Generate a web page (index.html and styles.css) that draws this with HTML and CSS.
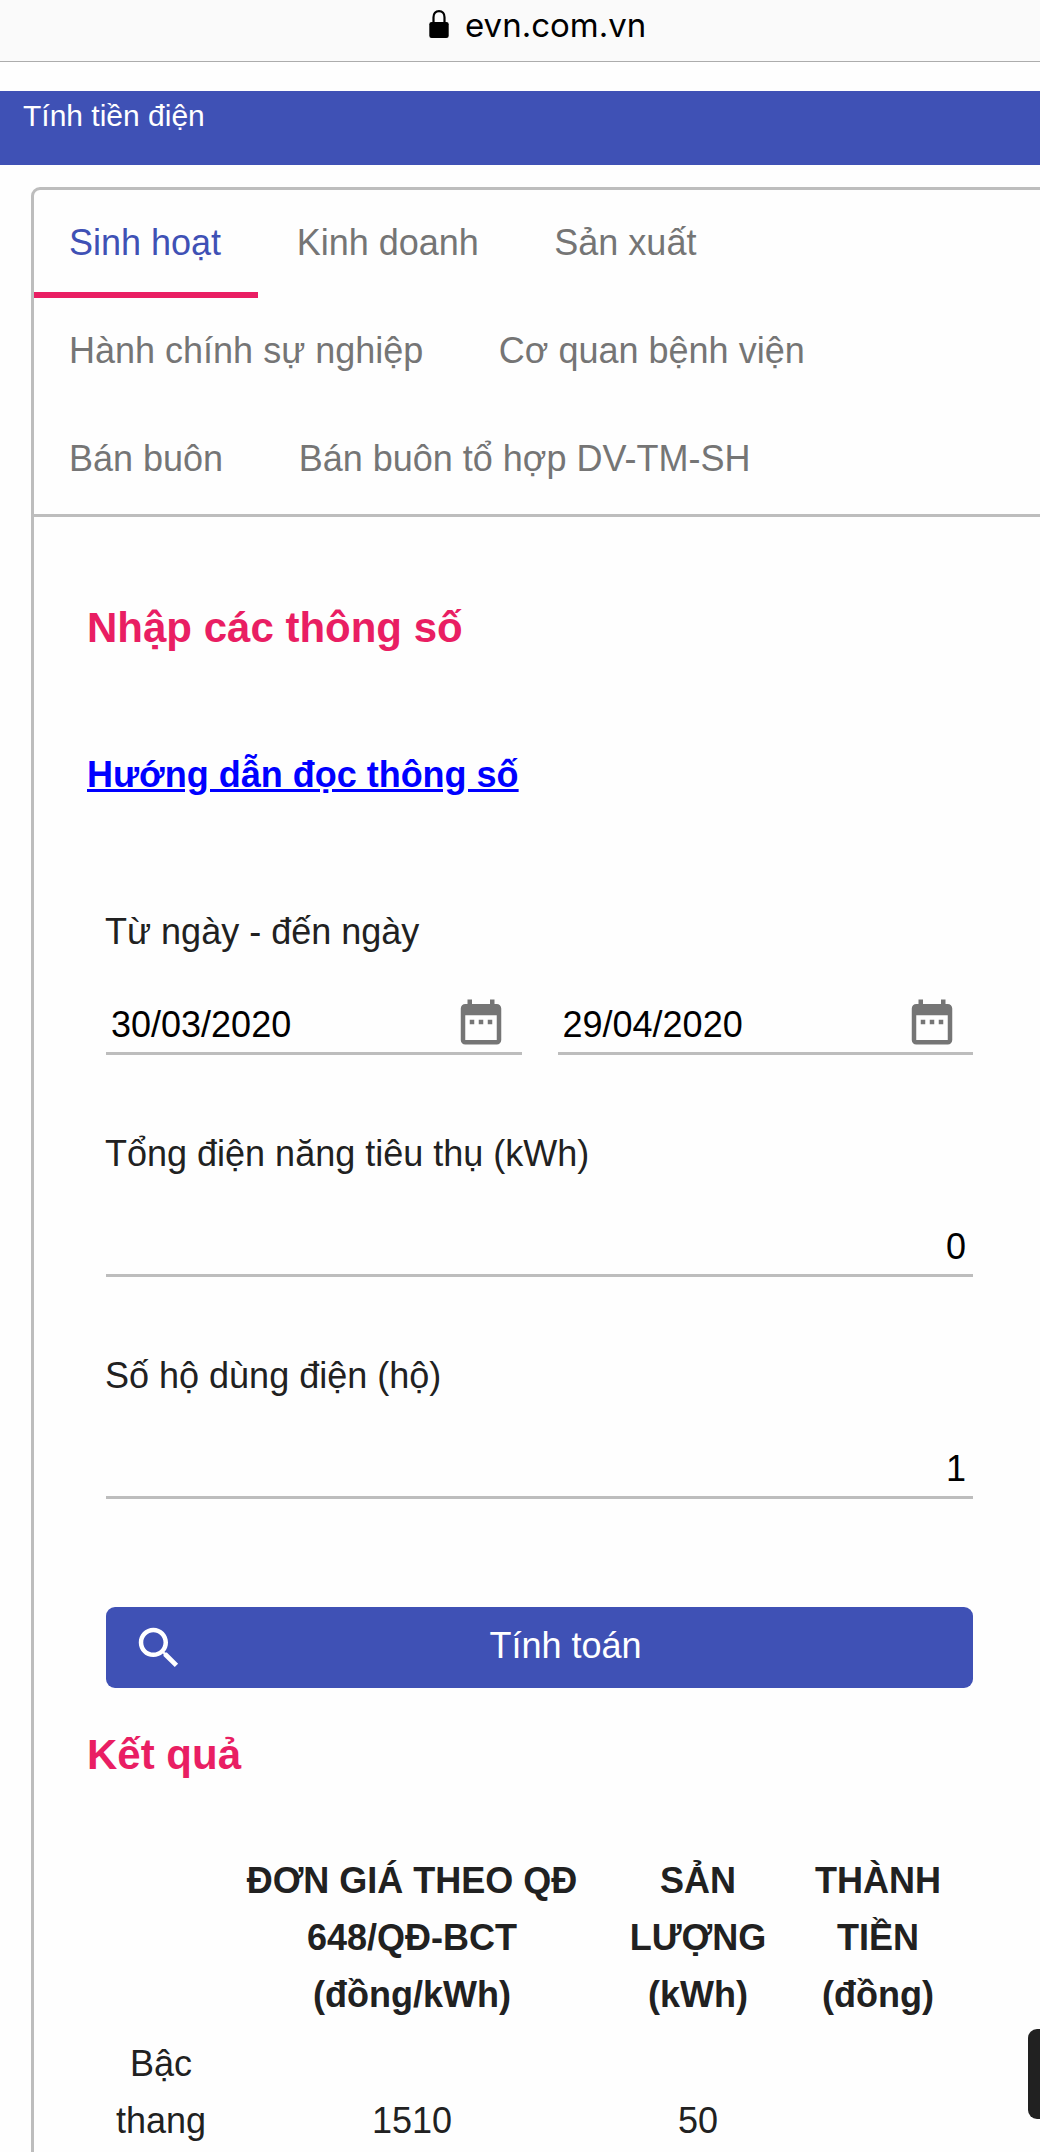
FILE: index.html
```html
<!DOCTYPE html>
<html lang="vi">
<head>
<meta charset="utf-8">
<title>Tính tiền điện</title>
<link rel="stylesheet" href="styles.css">
</head>
<body>
<header class="address-bar">
  <svg class="lock" viewBox="0 0 20 28"><path d="M4.500 13V7.200C4.500 3.600 6.600 1.100 10 1.100s5.500 2.500 5.500 6.100V13" fill="none" stroke="#000" stroke-width="2.200"/><rect x="0.300" y="12" width="19.400" height="16" rx="2.300"/></svg>
  <span class="host">evn.com.vn</span>
</header>
<div class="title-bar">Tính tiền điện</div>
<main class="card">
  <nav class="tabs">
    <a class="tab active">Sinh hoạt</a>
    <a class="tab">Kinh doanh</a>
    <a class="tab">Sản xuất</a>
    <a class="tab">Hành chính sự nghiệp</a>
    <a class="tab">Cơ quan bệnh viện</a>
    <a class="tab">Bán buôn</a>
    <a class="tab">Bán buôn tổ hợp DV-TM-SH</a>
  </nav>
  <section class="panel">
    <h2 class="heading">Nhập các thông số</h2>
    <a class="guide">Hướng dẫn đọc thông số</a>
    <div class="form">
      <div class="field">
        <div class="label">Từ ngày - đến ngày</div>
        <div class="dates">
          <div class="input date"><span>30/03/2020</span>
            <svg class="icon" viewBox="0 0 24 24"><path d="M9 11H7v2h2v-2zm4 0h-2v2h2v-2zm4 0h-2v2h2v-2zm2-7h-1V2h-2v2H8V2H6v2H5c-1.110 0-1.990.9-1.990 2L3 20c0 1.100.890 2 2 2h14c1.100 0 2-.9 2-2V6c0-1.100-.9-2-2-2zm0 16H5V9h14v11z"/></svg>
          </div>
          <div class="input date"><span>29/04/2020</span>
            <svg class="icon" viewBox="0 0 24 24"><path d="M9 11H7v2h2v-2zm4 0h-2v2h2v-2zm4 0h-2v2h2v-2zm2-7h-1V2h-2v2H8V2H6v2H5c-1.110 0-1.990.9-1.990 2L3 20c0 1.100.890 2 2 2h14c1.100 0 2-.9 2-2V6c0-1.100-.9-2-2-2zm0 16H5V9h14v11z"/></svg>
          </div>
        </div>
      </div>
      <div class="field">
        <div class="label">Tổng điện năng tiêu thụ (kWh)</div>
        <div class="input number">0</div>
      </div>
      <div class="field">
        <div class="label">Số hộ dùng điện (hộ)</div>
        <div class="input number">1</div>
      </div>
      <div class="button">
        <svg class="icon" viewBox="0 0 24 24"><path d="M15.500 14h-.79l-.28-.27C15.410 12.590 16 11.110 16 9.500 16 5.910 13.090 3 9.500 3S3 5.910 3 9.500 5.910 16 9.500 16c1.610 0 3.090-.59 4.230-1.570l.27.28v.79l5 4.990L20.490 19l-4.990-5zm-6 0C7.010 14 5 11.990 5 9.500S7.010 5 9.500 5 14 7.010 14 9.500 11.990 14 9.500 14z"/></svg>
        <span class="button-text">Tính toán</span>
      </div>
    </div>
    <h2 class="heading">Kết quả</h2>
    <div class="result">
      <div class="row head">
        <div></div>
        <div>ĐƠN GIÁ THEO QĐ<br>648/QĐ-BCT<br>(đồng/kWh)</div>
        <div>SẢN<br>LƯỢNG<br>(kWh)</div>
        <div>THÀNH<br>TIỀN<br>(đồng)</div>
      </div>
      <div class="row">
        <div>Bậc<br>thang</div>
        <div>1510</div>
        <div>50</div>
        <div></div>
      </div>
    </div>
  </section>
</main>
<div class="drawer-handle"></div>
</body>
</html>
```

FILE: styles.css
```css
* { box-sizing: border-box; }

body {
  position: relative;
  width: 1040px;
  height: 2152px;
  margin: 0;
  overflow: hidden;
  background: #fefefe;
  color: #212121;
  font: 36px/48px "Liberation Sans", Arial, sans-serif;
}

.address-bar {
  display: flex;
  height: 62px;
  padding: 10px 0 0 429px;
  gap: 16px;
  background: #fafafa;
  border-bottom: 1px solid #acacac;
}
.lock { width: 20px; height: 28px; }
.host {
  height: 28px;
  color: #000;
  font: 33px/30px Inter, sans-serif;
}

.title-bar {
  height: 74px;
  margin-top: 29px;
  padding: 1px 23px;
  background: #3f51b5;
  color: #fff;
  font-size: 30px;
}

.card {
  width: 1020px;
  height: 2000px;
  margin: 22px 0 0 31px;
  border: 3px solid #bdbdbd;
  border-radius: 9px;
}
.tabs {
  display: flex;
  flex-wrap: wrap;
  column-gap: 3.5px;
  height: 327px;
  padding-right: 100px;
  border-bottom: 3px solid #bdbdbd;
}
.tab {
  height: 108px;
  padding: 0 37px 0 35px;
  color: #757575;
  line-height: 106px;
}
.tab.active {
  border-bottom: 6px solid #e91e63;
  color: #3f51b5;
}
.panel { padding: 81px 64px 0 53px; }
.heading {
  margin: 0;
  color: #e91e63;
  font-size: 42px;
  line-height: 60px;
}
.guide {
  display: block;
  width: max-content;
  margin-top: 93px;
  color: #00f;
  font-weight: bold;
  text-decoration: underline;
}
.form {
  width: 867px;
  margin: 109px 0 37px 19px;
}
.label { margin-left: -1px; }
.field {
  height: 147px;
  margin-bottom: 75px;
}
.dates { display: flex; gap: 36px; }
.input {
  display: flex;
  align-items: flex-end;
  width: 100%;
  height: 99px;
  padding: 0 7px 3px;
  border-bottom: 3px solid #bdbdbd;
  color: #000;
}
.date {
  justify-content: space-between;
  padding: 0 14px 3px 5px;
}
.number { justify-content: flex-end; }
.icon {
  width: 54px;
  height: 54px;
  fill: #757575;
}
.button {
  display: flex;
  align-items: center;
  height: 81px;
  margin-top: 108px;
  padding: 0 28px 0 26px;
  border-radius: 9px;
  background: #3f51b5;
  color: #fff;
}
.button .icon { fill: #fff; }
.button-text {
  flex: 1;
  padding-bottom: 3px;
  text-align: center;
}

.result {
  width: 862px;
  margin: 67px 0 0 19px;
  line-height: 57px;
  text-align: center;
}
.row {
  display: grid;
  grid-template-columns: 110px 392px 180px 180px;
  align-items: end;
  margin-bottom: 12px;
}
.head { font-weight: bold; }

.drawer-handle {
  position: absolute;
  top: 2029px;
  right: -20px;
  width: 32px;
  height: 90px;
  border-radius: 9px;
  background: #212121;
}
```
